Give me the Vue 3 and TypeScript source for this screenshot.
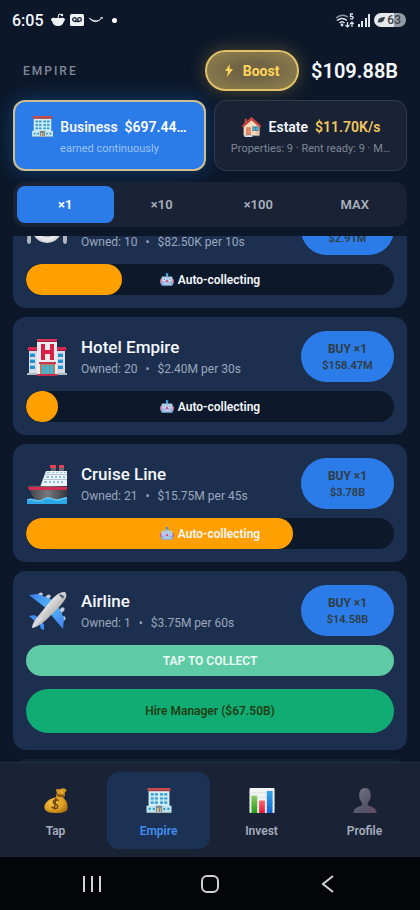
<script setup lang="ts">
import { onMounted, ref } from 'vue'

interface Venture {
  id: string
  icon: string
  name: string
  owned: number
  income: string
  price: string
  progress: number
  managed: boolean
  managerPrice?: string
}

const ventures: Venture[] = [
  { id: 'restaurant', icon: 'plate', name: 'Restaurant', owned: 10, income: '$82.50K per 10s', price: '$2.91M', progress: 26, managed: true },
  { id: 'hotel', icon: 'hotel', name: 'Hotel Empire', owned: 20, income: '$2.40M per 30s', price: '$158.47M', progress: 8, managed: true },
  { id: 'cruise', icon: 'ship', name: 'Cruise Line', owned: 21, income: '$15.75M per 45s', price: '$3.78B', progress: 72.5, managed: true },
  { id: 'airline', icon: 'plane', name: 'Airline', owned: 1, income: '$3.75M per 60s', price: '$14.58B', progress: 0, managed: false, managerPrice: '$67.50B' },
]

const amounts = ['×1', '×10', '×100', 'MAX']
const amount = ref('×1')

const pages = [
  { label: 'Tap', icon: 'bag' },
  { label: 'Empire', icon: 'office' },
  { label: 'Invest', icon: 'chart' },
  { label: 'Profile', icon: 'person' },
]
const page = ref('Empire')
const section = ref('business')

const list = ref<HTMLElement | null>(null)
const restoredScroll = 46

onMounted(() => {
  if (list.value) list.value.scrollTop = restoredScroll
})
</script>

<template>
  <div class="app">
    <svg class="sprite" aria-hidden="true">
      <defs>
        <linearGradient id="g-hull" x1="0" x2="1"><stop offset="0" stop-color="#3c3f44" /><stop offset="0.5" stop-color="#77797c" /><stop offset="1" stop-color="#35373b" /></linearGradient>
        <linearGradient id="g-body" x1="0" y1="0" x2="1" y2="1"><stop offset="0.3" stop-color="#f4f3f2" /><stop offset="0.7" stop-color="#a9a5a6" /></linearGradient>
        <linearGradient id="g-wing" x1="0" y1="0" x2="1" y2="1"><stop offset="0" stop-color="#3f7df0" /><stop offset="0.5" stop-color="#52b7f5" /><stop offset="1" stop-color="#3f7df0" /></linearGradient>
        <radialGradient id="g-bag" cx="0.35" cy="0.35" r="0.75"><stop offset="0" stop-color="#f3bf40" /><stop offset="0.6" stop-color="#dda025" /><stop offset="1" stop-color="#a86d12" /></radialGradient>
        <linearGradient id="g-person" x1="0" y1="0" x2="1" y2="1"><stop offset="0" stop-color="#77798a" /><stop offset="0.6" stop-color="#56576a" /><stop offset="1" stop-color="#624963" /></linearGradient>
        <linearGradient id="g-green" x1="0" y1="0" x2="0" y2="1"><stop offset="0" stop-color="#8fcb68" /><stop offset="1" stop-color="#22a013" /></linearGradient>
        <linearGradient id="g-red" x1="0" y1="0" x2="0" y2="1"><stop offset="0" stop-color="#f56a6c" /><stop offset="1" stop-color="#e5173f" /></linearGradient>
        <linearGradient id="g-blue" x1="0" y1="0" x2="0" y2="1"><stop offset="0" stop-color="#31a7ee" /><stop offset="1" stop-color="#1262cf" /></linearGradient>
        <radialGradient id="g-plate"><stop offset="0" stop-color="#d5d8d8" /><stop offset="0.6" stop-color="#b7bcbd" /><stop offset="0.66" stop-color="#f1f3f2" /><stop offset="1" stop-color="#d2d6d7" /></radialGradient>
      </defs>
      <symbol id="i-office" viewBox="0 0 24 24">
        <path d="M2 2h20v16H2z" fill="#d5eef6" /><path d="M1 0h22v3H1z" fill="#c94b4d" /><path d="M1 2h22v1H1z" fill="#93444c" />
        <path d="M4 5h3v2H4zm4 0h3v2H8zm5 0h3v2h-3zm4 0h3v2h-3zM4 9h3v2H4zm4 0h3v2H8zm5 0h3v2h-3zm4 0h3v2h-3zM4 13h3v2H4zm4 0h3v2H8zm5 0h3v2h-3zm4 0h3v2h-3z" fill="#3199cd" />
        <path d="M4 7h3v1H4zm4 0h3v1H8zm5 0h3v1h-3zm4 0h3v1h-3zM4 11h3v1H4zm4 0h3v1H8zm5 0h3v1h-3zm4 0h3v1h-3z" fill="#77c9e8" />
        <path d="M0 17h24v6H0z" fill="#c2e6ef" /><path d="M2 19h2v2H2zm4 0h2v2H6zm10 0h2v2h-2zm4 0h2v2h-2z" fill="#3199cd" />
        <path d="M9 17h6v6H9z" fill="#76838c" /><path d="M10 19h2v4h-2zm3 0h1v4h-1z" fill="#d9b583" /><path d="M0 23h24v1H0z" fill="#9fb8bf" />
      </symbol>
      <symbol id="i-house" viewBox="0 0 24 24">
        <path d="M4 3h3v6H4z" fill="#a74442" /><path d="M12 4L3 12v10h18V12z" fill="#f5d9bd" /><path d="M12 4l9 8v10h-4V9z" fill="#e9c3a3" />
        <path d="M12 1L1 11l1 2L12 4.500l10 8.500 1-2z" fill="#dd4c43" /><path d="M12 4.500l10 8.500v-1L12 3.500 2 12v1z" fill="#a92f32" />
        <path d="M6 13h5v9H6z" fill="#c96b50" /><path d="M7 14h3v7H7z" fill="#e18d69" /><circle cx="9.500" cy="17.500" r=".6" fill="#ffe09a" />
        <path d="M13 12h7v5h-7z" fill="#357f9b" /><path d="M14 13h2v3h-2zm3 0h2v3h-2z" fill="#57b6ce" /><path d="M3 22h18v1H3z" fill="#aab5ba" /><path d="M4 22h9v2H4z" fill="#dce3e5" />
      </symbol>
      <symbol id="i-plate" viewBox="0 0 40 40">
        <circle cx="20" cy="18" r="15" fill="url(#g-plate)" />
        <path d="M0 4v8c0 3 1 4 1 5l-1 14c0 4 4 4 4 0V4H3v9H2V4zM39 3c-3 0-4 7-4 13h1v15c0 4 4 4 4 0V4z" fill="#aeb6be" />
      </symbol>
      <symbol id="i-hotel" viewBox="0 0 40 40">
        <path d="M2 13h36v24H2z" fill="#d8dde6" /><path d="M1 10h9v4H1zm29 0h9v4h-9z" fill="#d72950" /><path d="M1 13h9v1H1zm29 0h9v1h-9z" fill="#981c46" />
        <path d="M10 4h20v34H10z" fill="#e9ebef" /><path d="M10 2h20v3H10z" fill="#d9335a" /><path d="M10 4h20v1H10z" fill="#a12244" />
        <path d="M14 7h4v6h5V7h4v16h-4v-6h-5v6h-4z" fill="#d91f48" />
        <path d="M3 16h5v4H3zm0 6h5v4H3zm0 6h5v4H3zm28-12h5v4h-5zm0 6h5v4h-5zm0 6h5v4h-5z" fill="#2490d2" /><path d="M3 16h5v1H3zm0 6h5v1H3zm0 6h5v1H3zm28-12h5v1h-5zm0 6h5v1h-5zm0 6h5v1h-5z" fill="#79c7e9" />
        <path d="M13 27h15v10H13z" fill="#bc7b5c" /><path d="M15 28h3v9h-3zm4 0h3v9h-3zm4 0h3v9h-3z" fill="#35b9dc" /><path d="M12 25h17v2H12z" fill="#c93650" /><path d="M0 36h10v2H0zm30 0h10v2H30z" fill="#aeb9c1" /><path d="M10 37h20v2H10z" fill="#c72b4a" />
      </symbol>
      <symbol id="i-ship" viewBox="0 0 40 40">
        <path d="M24 2h5v8h-5zm8 0h5v8h-5z" fill="#626770" /><path d="M23 1h6v3h-6zm9 0h5v3h-5z" fill="#e34154" />
        <path d="M19 7h21v16H13z" fill="#edf3f6" /><path d="M18 10h22v1H17zm-2 5h24v1H15z" fill="#b7c5d0" />
        <path d="M20 8h3v1h-3zm5 0h2v1h-2zm4 0h2v1h-2zm4 0h2v1h-2zm4 0h2v1h-2zM19 12h3v2h-3zm5 0h2v2h-2zm4 0h2v2h-2zm4 0h2v2h-2zm4 0h2v2h-2zM17 17h3v2h-3zm5 0h2v2h-2zm4 0h2v2h-2zm4 0h2v2h-2zm4 0h2v2h-2z" fill="#8cc3e4" />
        <path d="M1 21l12 1h27v15H9Q4 31 1 21z" fill="url(#g-hull)" /><path d="M1 23h39v3H2z" fill="#d52b50" />
        <path d="M0 36c4-3 7-1 10 0s6 0 9-2c4-2 6 1 10 1 5 0 7-2 11-2v7H0z" fill="#2da6e8" /><path d="M0 36c4-2 7 1 11 1s6-3 10-3 7 3 11 2 5-2 8-2" fill="none" stroke="#82d7fa" />
      </symbol>
      <symbol id="i-plane" viewBox="0 0 40 40">
        <g fill="#c3cbd8"><ellipse cx="13" cy="4" rx="2" ry="3" transform="rotate(50 13 4)" /><ellipse cx="21" cy="6" rx="2" ry="3" transform="rotate(50 21 6)" /><ellipse cx="35" cy="19" rx="2" ry="3" transform="rotate(40 35 19)" /><ellipse cx="36" cy="28" rx="2" ry="3" transform="rotate(40 36 28)" /></g>
        <path d="M2 4l9-1 17 7-8 8zM29 11l8 16-1 11-16-19z" fill="url(#g-wing)" /><path d="M2 25l5-1 9 5-5 4zM11 29l6 4v6l-3-1z" fill="#3f8bee" />
        <path d="M38 1c3 3 1 7-4 13L19 29Q11 36 5 37 5 32 12 24L26 7q7-7 12-6z" fill="url(#g-body)" /><path d="M33 3l4 2-1 3-4-4z" fill="#4c6077" /><path d="M6 36l9-10" stroke="#d8dce4" stroke-width="2" />
      </symbol>
      <symbol id="i-robot" viewBox="0 0 20 20">
        <circle cx="10" cy="2" r="2" fill="#379ce0" /><path d="M9 3h2v3H9z" fill="#86afd0" /><path d="M0 9h3v6H0zm17 0h3v6h-3z" fill="#d35f81" /><rect x="2" y="5" width="16" height="13" rx="2" fill="#a4c9ed" /><path d="M2 13h16v4q0 1-2 1H4q-2 0-2-1z" fill="#83ace0" />
        <circle cx="6" cy="9" r="2" fill="#fff" /><circle cx="14" cy="9" r="2" fill="#fff" /><circle cx="6" cy="9" r="1" fill="#315679" /><circle cx="14" cy="9" r="1" fill="#315679" /><path d="M9 10h2l1 3H8z" fill="#e34775" /><path d="M5 14h10v2H5z" fill="#f3f8fc" /><path d="M7 14v2m3-2v2m3-2v2" stroke="#6681a7" />
      </symbol>
      <symbol id="i-bag" viewBox="0 0 26 28">
        <path d="M13 1q3 1 5 0 5-2 7 2-3 1-2 4l-7 2-2-3z" fill="#d99b25" /><path d="M13 7l9-1 1 3-3 3-7-2z" fill="#c78c22" /><path d="M14 8l8 1" stroke="#7f4a11" stroke-width="2" /><path d="M14 10l7 1c4 3 5 7 5 11 0 5-6 6-13 6S0 27 0 21c0-5 7-10 14-11z" fill="url(#g-bag)" />
        <path d="M16 14q-5-2-6 1c-1 4 6 2 5 6-1 3-5 2-7 0M13 11l-2 13" fill="none" stroke="#68420f" stroke-width="1.600" /><path d="M18 3l3 3" stroke="#f4c557" />
      </symbol>
      <symbol id="i-chart" viewBox="0 0 26 26">
        <rect width="26" height="26" rx="1" fill="#f3f4f4" /><path d="M0 5h26M0 10h26M0 15h26M0 20h26" stroke="#dedfe0" /><path d="M2 8h6v18H2z" fill="url(#g-green)" /><path d="M10 13h6v13h-6z" fill="url(#g-red)" /><path d="M18 3h6v23h-6z" fill="url(#g-blue)" />
      </symbol>
      <symbol id="i-person" viewBox="0 0 24 26">
        <path d="M12 0c5 0 6 4 6 8 0 3-1 5-3 7v3l5 2q4 2 4 6H0q0-4 4-6l5-2v-3c-2-2-3-4-3-7 0-4 1-8 6-8z" fill="url(#g-person)" />
      </symbol>
    </svg>

    <div class="status">
      <div class="status-group">
        <span class="clock">6:05</span>
        <svg class="reddit" viewBox="0 0 14 14" aria-hidden="true"><path d="M7 5l1-4 3 1" fill="none" stroke="#eef2f5" /><circle cx="11" cy="2" r="1.200" fill="#eef2f5" /><path d="M0 6q2-2 4-1h6q2-1 4 1 0 2-1 2-1 5-6 5T1 8Q0 8 0 6z" fill="#eef2f5" /></svg>
        <svg class="voicemail" viewBox="0 0 14 12" aria-hidden="true"><rect width="14" height="12" rx="1.500" fill="#eef2f5" /><g fill="none" stroke="#182232" stroke-width="1.300"><circle cx="4.500" cy="5.500" r="1.800" /><circle cx="9.500" cy="5.500" r="1.800" /><path d="M4.500 7.500h5" /></g></svg>
        <svg class="smile" viewBox="0 0 14 6" aria-hidden="true"><path d="M0 1q7 5 12 1-6 6-12-1zM11 1l2-1 1 2" fill="#eef2f5" stroke="#eef2f5" stroke-width=".6" /></svg>
        <span class="dot"></span>
      </div>
      <div class="status-group right">
        <svg class="wifi" viewBox="0 0 19 15" aria-hidden="true"><g fill="none" stroke="#dce2ea"><path d="M1 5q6-5 12-1" stroke="#8a94a3" stroke-width="1.500" /><path d="M2 7.500q5-4 10 0M4.500 10q2.500-2.500 5 0" stroke-width="1.600" /><path d="M18 1h-2.500v2.500q3-.5 2.500 1.500t-3 .5" stroke-width="1.300" /><path d="M12.500 9v5m-2-2l2 2 2-2M17 14V9m-2 2l2-2 2 2" stroke-width="1.200" /></g><circle cx="7" cy="12" r="1.400" fill="#dce2ea" /></svg>
        <svg class="signal" viewBox="0 0 12 13" aria-hidden="true"><path d="M0 10h2v3H0zm3-3h2v6H3zm4-3h2v9H7zm3-4h2v13h-2z" fill="#e2e7ed" /></svg>
        <span class="battery"><svg viewBox="0 0 7 6" aria-hidden="true"><path d="M0 6q-1-6 7-6-1 7-7 5l4-3" fill="#3b4249" /></svg>63</span>
      </div>
    </div>

    <header class="header">
      <h1>EMPIRE</h1>
      <button class="boost" type="button">
        <svg viewBox="0 0 8 13" aria-hidden="true"><path d="M5 0L0 7h3l-1 6 6-8H4.500z" fill="#ffd45a" /></svg>
        Boost
      </button>
      <strong class="balance">$109.88B</strong>
    </header>

    <div class="sections">
      <button class="section" :class="{ selected: section === 'business' }" type="button" @click="section = 'business'">
        <span class="section-title"><svg class="section-icon" aria-hidden="true"><use href="#i-office" /></svg><b>Business</b><b class="rate">$697.44…</b></span>
        <small>earned continuously</small>
      </button>
      <button class="section" :class="{ selected: section === 'estate' }" type="button" @click="section = 'estate'">
        <span class="section-title"><svg class="section-icon" aria-hidden="true"><use href="#i-house" /></svg><b>Estate</b><b class="rate">$11.70K/s</b></span>
        <small>Properties: 9 · Rent ready: 9 · M…</small>
      </button>
    </div>

    <div class="amounts">
      <button v-for="option in amounts" :key="option" type="button" :class="{ selected: amount === option }" @click="amount = option">{{ option }}</button>
    </div>

    <main ref="list" class="list">
      <article v-for="item in ventures" :key="item.id" class="card">
        <div class="card-top">
          <svg class="card-icon" aria-hidden="true"><use :href="'#i-' + item.icon" /></svg>
          <div class="info">
            <h2>{{ item.name }}</h2>
            <p><span>Owned: {{ item.owned }}</span><span>•</span><span>{{ item.income }}</span></p>
          </div>
          <button class="buy" type="button"><b>BUY {{ amount }}</b><span>{{ item.price }}</span></button>
        </div>
        <div v-if="item.managed" class="track">
          <div class="fill" :style="{ width: item.progress + '%' }"></div>
          <span class="track-label"><svg aria-hidden="true"><use href="#i-robot" /></svg>Auto-collecting</span>
        </div>
        <template v-else>
          <button class="collect" type="button">TAP TO COLLECT</button>
          <button class="hire" type="button">Hire Manager ({{ item.managerPrice }})</button>
        </template>
      </article>
      <div class="card upcoming"></div>
    </main>

    <nav class="nav">
      <button v-for="entry in pages" :key="entry.label" type="button" :class="{ selected: page === entry.label }" @click="page = entry.label">
        <svg aria-hidden="true"><use :href="'#i-' + entry.icon" /></svg>
        <span>{{ entry.label }}</span>
      </button>
    </nav>

    <div class="system">
      <button type="button" aria-label="Recent apps"><svg viewBox="0 0 18 18"><path d="M1 1v16M9 1v16M17 1v16" /></svg></button>
      <button type="button" aria-label="Home"><svg viewBox="0 0 18 18"><rect x="1" y="1" width="16" height="16" rx="5" /></svg></button>
      <button type="button" aria-label="Back"><svg viewBox="0 0 18 18"><path d="M14 1L4 9l10 8" /></svg></button>
    </div>
  </div>
</template>

<style>
body {
  margin: 0;
  background: #0c1729;
}
</style>

<style scoped>
.app {
  display: flex;
  flex-direction: column;
  height: 100vh;
  color: #f4f7fb;
  background: #0c1729;
  font-family: Roboto, "Liberation Sans", sans-serif;
  font-size: 12px;
}
button {
  border: 0;
  padding: 0;
  color: inherit;
  font: inherit;
  cursor: pointer;
}
h1, h2, p { margin: 0; }
svg { display: block; flex: none; }
.sprite { position: absolute; width: 0; height: 0; }

.status {
  display: flex;
  justify-content: space-between;
  align-items: center;
  height: 40px;
  padding: 0 14px 0 12px;
}
.status-group { display: flex; align-items: center; gap: 5px; }
.clock { font-size: 16px; font-weight: 500; margin-right: 2px; }
.reddit { width: 14px; height: 14px; }
.voicemail { width: 14px; height: 12px; }
.smile { width: 14px; height: 6px; }
.dot { width: 5px; height: 5px; margin-left: 4px; border-radius: 50%; background: #fff; }
.wifi { width: 19px; height: 15px; }
.signal { width: 12px; height: 13px; }
.right { gap: 4px; }
.battery {
  display: flex;
  align-items: center;
  gap: 2px;
  height: 14px;
  padding: 0 5px 0 4px;
  border-radius: 8px;
  background: linear-gradient(90deg, #e5e9ec 62%, #949ba5 62%);
  color: #3b4249;
  font-size: 12px;
  font-weight: 500;
}
.battery svg { width: 7px; height: 6px; }

.header { display: flex; align-items: center; gap: 12px; height: 41px; padding: 10px 22px 9px 23px; }
h1 { flex: 1; color: #7f8997; font-size: 12px; font-weight: 500; letter-spacing: 2px; }
.boost {
  display: flex;
  align-items: center;
  justify-content: center;
  gap: 10px;
  box-sizing: border-box;
  width: 94px;
  height: 41px;
  border: 2px solid #e0c068;
  border-radius: 21px;
  background: radial-gradient(ellipse, #716545 30%, #94834e);
  box-shadow: 0 0 18px #b6984366;
  color: #ffd45a;
  font-size: 14px;
  font-weight: 700;
}
.boost svg { width: 8px; height: 13px; }
.balance { font-size: 20px; font-weight: 600; }

.sections { display: grid; grid-template-columns: 1fr 1fr; gap: 8px; padding: 0 13px; }
.section {
  display: flex;
  flex-direction: column;
  align-items: center;
  justify-content: center;
  gap: 5px;
  height: 71px;
  min-width: 0;
  border: 1px solid #303a4b;
  border-radius: 12px;
  background: #1a2235;
  white-space: nowrap;
}
.section.selected {
  border: 2px solid #cdbf90;
  background: #2b7ce9;
  box-shadow: 0 0 22px #1763b880;
}
.section-title { display: flex; align-items: center; gap: 7px; font-size: 14px; }
.section-title b { font-weight: 600; }
.section-icon { width: 21px; height: 21px; }
.rate { color: #f4c95d; }
.selected .rate { color: #fff; }
.section small { color: #7e8797; font-size: 11px; }
.section.selected small { color: #9bc3f8; }

.amounts {
  display: grid;
  grid-template-columns: repeat(4, 1fr);
  margin: 11px 13px 9px;
  padding: 4px;
  border-radius: 12px;
  background: #1a2235;
  z-index: 1;
}
.amounts button {
  height: 37px;
  border-radius: 8px;
  background: none;
  color: #a7afbd;
  font-size: 13px;
  font-weight: 600;
}
.amounts button.selected { background: #2b7ce9; color: #fff; }

.list {
  flex: 1;
  min-height: 0;
  overflow-y: auto;
  scrollbar-width: none;
  padding: 0 13px;
}
.card {
  display: flex;
  flex-direction: column;
  gap: 9px;
  margin-bottom: 9px;
  padding: 14px 13px 13px;
  border-radius: 13px;
  background: #1d2f4f;
}
.upcoming { height: 91px; background: #142239; }
.card-top { display: flex; align-items: center; gap: 13px; height: 51px; }
.card-icon { width: 42px; height: 40px; }
.info { flex: 1; min-width: 0; white-space: nowrap; }
h2 { font-size: 17px; font-weight: 500; line-height: 24px; }
.info p { display: flex; gap: 8px; color: #9aa7bb; font-size: 12px; line-height: 20px; }
.buy {
  display: flex;
  flex-direction: column;
  justify-content: center;
  gap: 3px;
  width: 93px;
  height: 51px;
  border-radius: 26px;
  background: #2b7ce9;
  color: #2f3d40;
  font-size: 11px;
  font-weight: 600;
  text-align: center;
  align-items: center;
}
.buy b { font-size: 12px; font-weight: 700; }
.track { position: relative; height: 31px; border-radius: 16px; background: #0d192a; overflow: hidden; }
.fill { min-width: 32px; height: 100%; border-radius: 16px; background: #ffa000; }
.track-label {
  position: absolute;
  inset: 0;
  display: flex;
  align-items: center;
  justify-content: center;
  gap: 4px;
  font-size: 12px;
  font-weight: 600;
}
.track-label svg { width: 14px; height: 14px; }
.collect {
  height: 31px;
  border-radius: 16px;
  background: #5fcba6;
  color: #eefcf7;
  font-size: 12px;
  font-weight: 600;
}
.hire {
  height: 44px;
  margin: 4px 0;
  border-radius: 22px;
  background: #10ac74;
  color: #213e12;
  font-size: 12px;
  font-weight: 600;
}

.nav {
  display: grid;
  grid-template-columns: repeat(4, 1fr);
  padding: 9px 4px 8px;
  border-top: 1px solid #222e42;
  background: #1a2235;
}
.nav button {
  display: flex;
  flex-direction: column;
  align-items: center;
  gap: 11px;
  height: 77px;
  box-sizing: border-box;
  padding-top: 16px;
  border-radius: 12px;
  background: none;
  color: #a4adbd;
  font-size: 12px;
  font-weight: 600;
}
.nav svg { width: 26px; height: 25px; }
.nav button.selected { background: #1c3255; color: #438ff0; }

.system {
  display: grid;
  grid-template-columns: repeat(3, 1fr);
  height: 53px;
  padding: 0 33px;
  background: #040508;
}
.system button { display: flex; align-items: center; justify-content: center; background: none; }
.system svg { width: 18px; height: 18px; fill: none; stroke: #d2d2d2; stroke-width: 2; }
</style>
